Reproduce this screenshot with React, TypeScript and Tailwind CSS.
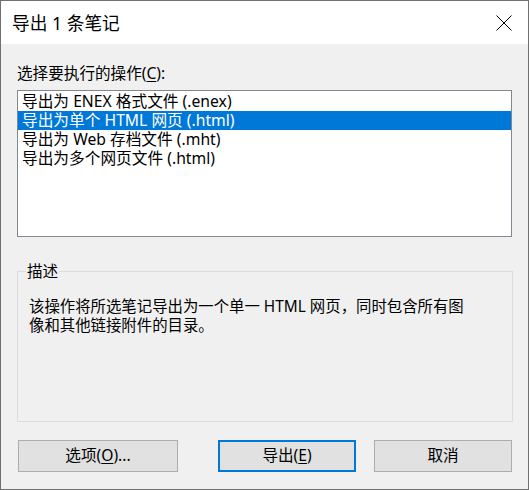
import { useState } from 'react'

const items = [
  '导出为 ENEX 格式文件 (.enex)',
  '导出为单个 HTML 网页 (.html)',
  '导出为 Web 存档文件 (.mht)',
  '导出为多个网页文件 (.html)',
]

export default function App() {
  const [selected, setSelected] = useState(1)

  return (
    <div
      className="flex h-[490px] w-[529px] flex-col border border-[#707070] bg-[#f0f0f0] text-black"
      style={{ fontFamily: '"Noto Sans", "Noto Sans CJK SC", sans-serif' }}
    >
      {/* title bar */}
      <div className="flex h-[43px] shrink-0 items-center justify-between bg-white pl-[11px] pr-[16px]">
        <span className="pt-[1px] text-[17.7px] leading-[22px]">导出 1 条笔记</span>
        <svg width="16" height="16" viewBox="0 0 16 16" className="mt-[1px]" aria-hidden>
          <path d="M0.5 0.5 L15.5 15.5 M15.5 0.5 L0.5 15.5" stroke="#000" strokeWidth="1" fill="none" />
        </svg>
      </div>

      <div className="flex flex-1 flex-col pl-[16px] pt-[19px]">
        <p className="text-[15.6px] leading-[20px]">
          选择要执行的操作(<span className="underline underline-offset-2">C</span>):
        </p>

        <div className="mt-[7px] h-[147px] w-[495px] border border-[#828790] bg-white pt-[1px]">
          {items.map((text, i) => (
            <div
              key={text}
              onClick={() => setSelected(i)}
              className={
                'h-[19px] whitespace-nowrap pl-[4px] text-[15.7px] leading-[19px] ' +
                (i === selected ? 'bg-[#0078d7] text-white' : 'text-black')
              }
            >
              {text}
            </div>
          ))}
        </div>

        {/* group box */}
        <div className="relative mt-[34px] h-[151px] w-[496px] border border-[#dcdcdc] pl-[11px] pt-[25px]">
          <span className="absolute left-[8px] top-[-11px] bg-[#f0f0f0] px-[1px] text-[15.6px] leading-[20px]">
            描述
          </span>
          <p className="whitespace-nowrap text-[15.4px] leading-[19px]">
            该操作将所选笔记导出为一个单一 HTML 网页，同时包含所有图
            <br />
            像和其他链接附件的目录。
          </p>
        </div>

        <div className="mt-[18px] flex">
          <button className="ml-[1px] h-[32px] w-[160px] border border-[#adadad] bg-[#e1e1e1] text-[15.6px]">
            选项(<span className="underline underline-offset-2">O</span>)...
          </button>
          <button className="ml-[40px] h-[32px] w-[138px] border-2 border-[#0078d7] bg-[#e1e1e1] text-[15.6px]">
            导出(<span className="underline underline-offset-2">E</span>)
          </button>
          <button className="ml-[18px] h-[32px] w-[138px] border border-[#adadad] bg-[#e1e1e1] text-[15.6px]">
            取消
          </button>
        </div>
      </div>
    </div>
  )
}
